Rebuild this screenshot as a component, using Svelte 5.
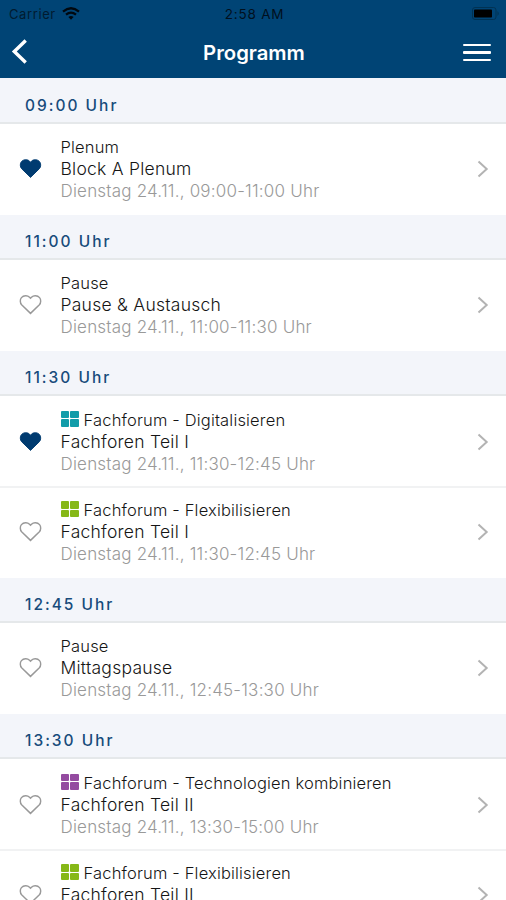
<script>
    const heart = 'M12 20.300 L2.700 11.200 C.900 9.300 .900 5.600 2.500 3.800 C4.800 1.200 8.800 1.200 11 3.300 L12 4.400 L13 3.300 C15.200 1.200 19.200 1.200 21.500 3.800 C23.100 5.600 23.100 9.300 21.300 11.200 Z';

    const groups = [
        { time: '09:00', items: [
            { type: 'Plenum', title: 'Block A Plenum', slot: '09:00-11:00', liked: true }
        ] },
        { time: '11:00', items: [
            { type: 'Pause', title: 'Pause & Austausch', slot: '11:00-11:30' }
        ] },
        { time: '11:30', items: [
            { type: 'Fachforum - Digitalisieren', title: 'Fachforen Teil I', slot: '11:30-12:45', color: 'teal', liked: true },
            { type: 'Fachforum - Flexibilisieren', title: 'Fachforen Teil I', slot: '11:30-12:45', color: 'green' }
        ] },
        { time: '12:45', items: [
            { type: 'Pause', title: 'Mittagspause', slot: '12:45-13:30' }
        ] },
        { time: '13:30', items: [
            { type: 'Fachforum - Technologien kombinieren', title: 'Fachforen Teil II', slot: '13:30-15:00', color: 'purple' },
            { type: 'Fachforum - Flexibilisieren', title: 'Fachforen Teil II', slot: '13:30-15:00', color: 'green' }
        ] }
    ];
</script>

<div class="screen">
    <header>
        <div class="status">
            <div class="carrier">
                <span>Carrier</span>
                <svg width="18" height="13" viewBox="0 0 18 13" fill="none" stroke="#00080f" stroke-width="2.300">
                    <path d="M1 4.600 Q9 -2 17 4.600" />
                    <path d="M4 7.700 Q9 3.600 14 7.700" />
                    <path d="M6.400 10 Q9 7.800 11.600 10 L9 12.800 Z" fill="#00080f" stroke="none" />
                </svg>
            </div>
            <span class="clock">2:58 AM</span>
            <svg class="battery" width="28" height="13" viewBox="0 0 28 13">
                <rect x=".5" y=".5" width="23.500" height="12" rx="2.500" fill="none" stroke="#003253" />
                <rect x="2" y="2.500" width="18" height="8" rx=".8" fill="#000" />
                <path d="M25.500 4 Q28 6.500 25.500 9 Z" fill="#003253" />
            </svg>
        </div>
        <div class="nav">
            <svg width="18" height="28" viewBox="0 0 18 28" fill="none" stroke="#fff" stroke-width="3.400">
                <path d="M15.700 2.500 L4.300 13.500 L15.700 24.500" />
            </svg>
            <h1>Programm</h1>
            <div class="burger"><i></i><i></i><i></i></div>
        </div>
    </header>

    {#each groups as group}
        <h2>{group.time} Uhr</h2>
        {#each group.items as item}
            <div class="row">
                <svg class="heart" class:liked={item.liked} viewBox="0 0 24 22">
                    <path d={heart} />
                </svg>
                <div class="text">
                    <div class="type">
                        {#if item.color}
                            <span class="tiles {item.color}"><i></i><i></i><i></i><i></i></span>
                        {/if}
                        <span>{item.type}</span>
                    </div>
                    <div class="title">{item.title}</div>
                    <div class="date">Dienstag 24.11., {item.slot} Uhr</div>
                </div>
                <svg class="chevron" width="12" height="18" viewBox="0 0 12 18">
                    <path d="M1.500 1.500 L9.700 9 L1.500 16.500" />
                </svg>
            </div>
        {/each}
    {/each}
</div>

<style>
    :global(body) {
        background: #fff;
        overflow: hidden;
    }
    .screen {
        height: 900px;
        overflow: hidden;
        font-family: Inter, "Liberation Sans", sans-serif;
        color: #151515;
    }
    header {
        height: 78.4px;
        background: #004475;
    }
    .status {
        display: grid;
        grid-template-columns: 1fr auto 1fr;
        align-items: center;
        height: 27px;
        padding: 0 6px 0 9px;
        font-size: 13px;
        color: #001b30;
    }
    .carrier {
        display: flex;
        align-items: center;
        gap: 6px;
        letter-spacing: .6px;
    }
    .clock {
        font-size: 13.5px;
        letter-spacing: .8px;
        color: #00101e;
    }
    .battery {
        justify-self: end;
    }
    .nav {
        display: grid;
        grid-template-columns: 30px 1fr 30px;
        align-items: center;
        height: 50px;
        padding: 0 14px 0 10px;
    }
    h1 {
        margin: 0;
        padding-left: 6px;
        text-align: center;
        font-size: 20.3px;
        font-weight: 600;
        color: #fff;
    }
    .burger {
        display: flex;
        flex-direction: column;
        gap: 4.7px;
        padding: 1px 1px 0;
    }
    .burger i {
        height: 2.8px;
        border-radius: 1px;
        background: #fff;
    }
    h2 {
        box-sizing: border-box;
        height: 45.5px;
        margin: 0;
        padding: 9px 25px 0;
        border-bottom: 2px solid #e5e8ea;
        background: #f3f5fa;
        color: #174b7b;
        font-size: 15.5px;
        font-weight: 500;
        line-height: 36px;
        letter-spacing: 2px;
    }
    header + h2 {
        padding-top: 10px;
    }
    .row {
        box-sizing: border-box;
        display: flex;
        align-items: center;
        height: 90.7px;
        padding: 0 17px 0 19px;
    }
    .row + .row {
        height: 91.7px;
        margin-top: -1px;
        padding-bottom: 1px;
        border-top: 2px solid #f1f2f3;
    }
    .heart {
        width: 23px;
        height: 21px;
        margin: -1px 18.5px 0 0;
        fill: none;
        stroke: #999;
        stroke-width: 1.5;
    }
    .heart.liked {
        fill: #003b70;
        stroke: #003b70;
        stroke-width: 1;
    }
    .text {
        flex: 1;
        font-size: 16.5px;
        font-weight: 300;
        line-height: 22px;
        letter-spacing: .17px;
        white-space: nowrap;
    }
    .type {
        display: flex;
        align-items: center;
        gap: 5px;
    }
    .title {
        font-size: 17.5px;
        letter-spacing: .25px;
    }
    .date {
        font-size: 17px;
        letter-spacing: .2px;
        color: #999;
    }
    .tiles {
        display: grid;
        grid-template: 1fr 1fr / 1fr 1fr;
        gap: 1px;
        width: 18px;
        height: 16px;
        margin-top: -2px;
    }
    .tiles i {
        border-radius: 1px;
    }
    .teal i {
        background: #119ca9;
    }
    .green i {
        background: #86b817;
    }
    .purple i {
        background: #944ba0;
    }
    .chevron {
        fill: none;
        stroke: #b3b3b3;
        stroke-width: 2;
    }
</style>
